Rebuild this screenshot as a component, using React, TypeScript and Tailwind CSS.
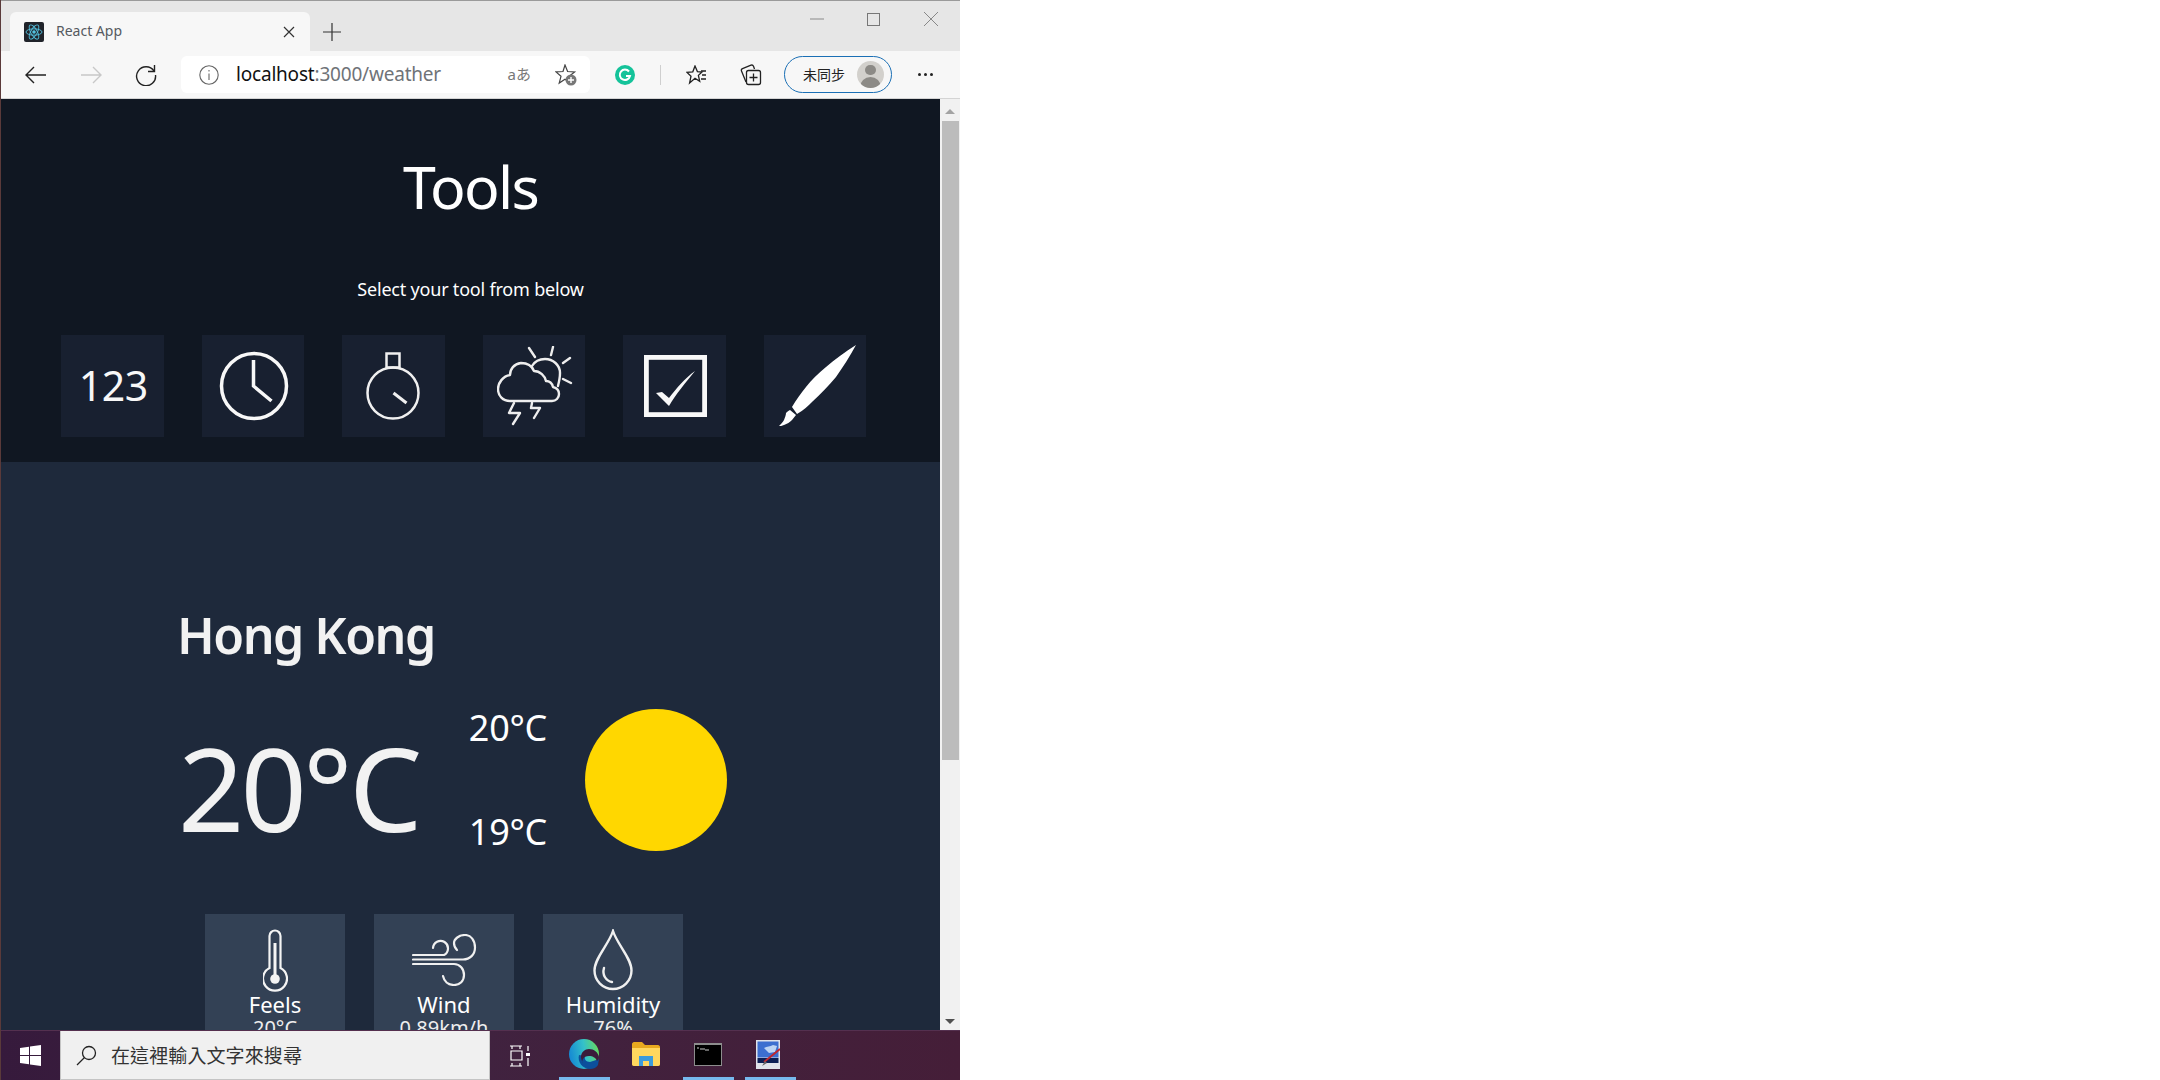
import React from 'react';

const segoe = "font-['Noto_Sans','Noto_Sans_CJK_TC',sans-serif]";

// Tool tiles on the dark header
function ToolTile({ children, className = '' }: { children: React.ReactNode; className?: string }) {
  return (
    <div className={`flex h-[102px] w-[102.5px] shrink-0 items-center justify-center bg-[#182030] ${className}`}>
      {children}
    </div>
  );
}

function ClockIcon() {
  return (
    <svg className="ml-[2px]" width="70" height="70" viewBox="0 0 70 70" fill="none" stroke="#f8f8f8" strokeWidth="3.5">
      <circle cx="35" cy="35" r="32.5" />
      <path d="M34.5 9v26l18 15" />
    </svg>
  );
}

function StopwatchIcon() {
  return (
    <svg width="54" height="68" viewBox="0 0 54 68" fill="none" stroke="#f0f0f0" strokeWidth="2.5">
      <circle cx="27" cy="41" r="25.5" />
      <rect x="20.5" y="1.5" width="13" height="14" />
      <path d="M27.5 41l13 10" strokeWidth="3" />
    </svg>
  );
}

function StormIcon() {
  return (
    <svg className="ml-[2px]" width="76" height="80" viewBox="0 0 76 80" fill="none" stroke="#eeeeee" strokeWidth="2.4" strokeLinecap="round" strokeLinejoin="round">
      <path d="M13 55h42c4 0 7-3 7-7 0-3-2-6-6-7-1-4-4-6-7-6-1-5-6-10-12-10-2-5-7-8-13-8-7 1-11 6-11 12C6 30 1 37 1 43c0 7 5 12 12 12z" />
      <path d="M35 20c3-5 8-7 13-7 8 0 15 6 15 14 0 5-1 9-2 13" />
      <path d="M32 2l6 9M56 1l-2 8M73 12l-7 5M74 37l-8-4" />
      <path d="M17 57l-5 10h11l-7 11M35 57l-1 5h9l-6 10" />
    </svg>
  );
}

function CheckboxIcon() {
  return (
    <svg className="ml-[1px]" width="63" height="62" viewBox="0 0 63 62" fill="none">
      <rect x="2.4" y="2.4" width="58.2" height="57.2" stroke="#f8f8f8" strokeWidth="4.8" />
      <path d="M12 38l6-1 7 6c7-9 16-20 26-27-9 11-19 23-26 35z" fill="#f8f8f8" />
    </svg>
  );
}

function BrushIcon() {
  return (
    <svg className="ml-[6px]" width="78" height="82" viewBox="0 0 78 82" fill="#ffffff">
      <path d="M77 0C66 7 56 14 47 22 39 29 32 35 27 42 22 48 17 55 13 62l5 7C25 65 29 61 33 57 42 49 50 40 57 32 64 22 71 11 77 0z" />
      <path d="M11 65l6 5-4 5c-2 2-5 4-8 5-2 1-4 1-5 1 2-2 4-4 5-6 1-3 2-5 2-7 1-1 2-2 4-3z" />
    </svg>
  );
}

function ThermometerIcon() {
  return (
    <svg width="25" height="63" viewBox="0 0 25 63" fill="none" stroke="#f4f4f4" strokeWidth="2.2">
      <path d="M6.5 39V7a5.5 5.5 0 0 1 11 0v32a12 12 0 1 1-11 0z" />
      <path d="M12 14v34" strokeWidth="3" />
      <circle cx="12" cy="50" r="4.8" fill="#f4f4f4" stroke="none" />
    </svg>
  );
}

function WindIcon() {
  return (
    <svg width="65" height="52" viewBox="0 0 65 52" fill="none" stroke="#f0f0f0" strokeWidth="2.2" strokeLinecap="round">
      <path d="M1 21h31a7.5 7.5 0 1 0-11-7" />
      <path d="M1 25.5h50c7 0 12-5 12-12S59 1 53 1c-6 0-11 4-11 8 0 3 1 5 3 7" />
      <path d="M1 30h41c6 0 10 5 10 11s-4 10-10 10c-6 0-10-4-11-9" />
    </svg>
  );
}

function DropIcon() {
  return (
    <svg width="40" height="62" viewBox="0 0 40 62" fill="none" stroke="#f0f0f0" strokeWidth="2.4" strokeLinecap="round">
      <path d="M20 2C16 15 1.5 29 1.5 41.5a18.5 18.5 0 0 0 37 0C38.5 29 24 15 20 2z" />
      <path d="M11 39c-2 7 2 13 8 14" />
    </svg>
  );
}

function StatCard({ icon, label, value }: { icon: React.ReactNode; label: string; value: string }) {
  return (
    <div className="flex h-[150px] w-[140px] shrink-0 flex-col items-center bg-[#334155] pt-[14px] text-white">
      <div className="flex h-[64px] items-center">{icon}</div>
      <div className="text-[22px] leading-[24px]">{label}</div>
      <div className="text-[20px] leading-[24px] text-[#eeeeee]">{value}</div>
    </div>
  );
}

function BrowserChrome() {
  return (
    <div className="shrink-0">
      {/* tab strip */}
      <div className="flex h-[51px] border-t border-[#9a9a9a] bg-[#e6e6e6] pt-[11px] pl-[9px]">
        <div className="flex h-[39px] w-[300px] items-center rounded-t-[6px] bg-[#f7f7f7] pl-[14px]">
          <svg width="20" height="20" viewBox="0 0 20 20" fill="none" stroke="#53c1de" strokeWidth="0.9">
            <rect width="20" height="20" rx="2" fill="#20232a" stroke="none" />
            <circle cx="10" cy="10" r="1.8" fill="#53c1de" stroke="none" />
            <ellipse cx="10" cy="10" rx="8" ry="3.2" />
            <ellipse cx="10" cy="10" rx="8" ry="3.2" transform="rotate(60 10 10)" />
            <ellipse cx="10" cy="10" rx="8" ry="3.2" transform="rotate(120 10 10)" />
          </svg>
          <span className="-mt-[2px] ml-[12px] text-[14px] text-[#555a60]">React App</span>
          <svg className="ml-auto mr-[15px]" width="12" height="12" viewBox="0 0 12 12" stroke="#333" strokeWidth="1.2">
            <path d="M1 1l10 10M11 1L1 11" />
          </svg>
        </div>
        <svg className="ml-[13px] mt-[11px]" width="18" height="18" viewBox="0 0 18 18" stroke="#333" strokeWidth="1.2">
          <path d="M9 0v18M0 9h18" />
        </svg>
        <div className="ml-auto flex h-[14px] items-center pr-[22px]">
          <svg width="14" height="14" viewBox="0 0 14 14" stroke="#8a8a8a" strokeWidth="1" fill="none">
            <path d="M0 7h14" />
          </svg>
          <svg className="ml-[43px]" width="13" height="13" viewBox="0 0 13 13" stroke="#777" strokeWidth="1" fill="none">
            <rect x="0.5" y="0.5" width="12" height="12" />
          </svg>
          <svg className="ml-[44px]" width="14" height="14" viewBox="0 0 14 14" stroke="#888" strokeWidth="1">
            <path d="M0 0l14 14M14 0L0 14" />
          </svg>
        </div>
      </div>
      {/* toolbar */}
      <div className="flex h-[48px] items-center border-b border-[#d4d4d4] bg-[#f7f7f7] pl-[24px]">
        <svg width="22" height="18" viewBox="0 0 22 18" fill="none" stroke="#222" strokeWidth="1.4">
          <path d="M21 9H1M9 1L1 9l8 8" />
        </svg>
        <svg className="ml-[33px]" width="22" height="18" viewBox="0 0 22 18" fill="none" stroke="#c8c8c8" strokeWidth="1.4">
          <path d="M1 9h20M13 1l8 8-8 8" />
        </svg>
        <svg className="ml-[33px]" width="22" height="22" viewBox="0 0 22 22" fill="none" stroke="#222" strokeWidth="1.4">
          <path d="M19 7A9.5 9.5 0 1 0 20.5 11" />
          <path d="M19.5 1v6.5h-6.5" />
        </svg>
        <div className="ml-[24px] flex h-[37px] w-[409px] items-center rounded-[6px] bg-white pl-[18px]">
          <svg width="20" height="20" viewBox="0 0 20 20" fill="none" stroke="#666" strokeWidth="1.1">
            <circle cx="10" cy="10" r="9.2" />
            <path d="M10 8.5V15M10 5v1.6" />
          </svg>
          <span className="ml-[17px] text-[19px] tracking-[-0.2px] text-[#111]">
            localhost<span className="text-[#6f7378]">:3000/weather</span>
          </span>
          <span className="ml-auto text-[15px] text-[#777]">aあ</span>
          <svg className="ml-[24px] mr-[13px]" width="22" height="22" viewBox="0 0 22 22" fill="none" stroke="#444" strokeWidth="1.2">
            <path d="M10 1l2.6 6.5 7 .4-5.4 4.4 1.8 6.8-6-3.8-5.8 3.8 1.8-6.8L1 7.9l7-.4z" />
            <circle cx="16" cy="16" r="5.5" fill="#777" stroke="none" />
            <path d="M16 13v6M13 16h6" stroke="#fff" strokeWidth="1.4" />
          </svg>
        </div>
        <svg className="ml-[25px]" width="20" height="20" viewBox="0 0 20 20">
          <circle cx="10" cy="10" r="10" fill="#15c39a" />
          <path d="M14 6.5A5.2 5.2 0 1 0 15 11h-4" fill="none" stroke="#fff" strokeWidth="2" />
        </svg>
        <div className="ml-[25px] h-[20px] w-px bg-[#cfcfcf]" />
        <svg className="ml-[25px]" width="22" height="20" viewBox="0 0 22 20" fill="none" stroke="#222" strokeWidth="1.3">
          <path d="M9 1l2.4 5.6 4.6.4-3.6 3.4 1.3 6-4.7-3.2L3.6 18 5 11.2 1 7.4l5.8-.6z" />
          <path d="M15 6h5M16 10h4M15 14h5" />
        </svg>
        <svg className="ml-[32px]" width="22" height="22" viewBox="0 0 22 22" fill="none" stroke="#222" strokeWidth="1.3">
          <path d="M6 18L1.5 7c-.4-1 0-2 1-2.4L11 1.2c1-.4 2-.1 2.5 1L14.5 5" />
          <rect x="6.5" y="6.5" width="14" height="14" rx="2" />
          <path d="M13.5 9.5v8M9.5 13.5h8" />
        </svg>
        <div className="ml-[22px] flex h-[37px] w-[108px] items-center rounded-full border border-[#1a6fb5] pl-[18px]">
          <span className="font-['Noto_Sans_CJK_TC',sans-serif] text-[14px] text-[#222]">未同步</span>
          <div className="ml-[12px] flex h-[27px] w-[27px] flex-col items-center overflow-hidden rounded-full bg-[#d2d0cc]">
            <div className="mt-[4px] h-[11px] w-[11px] rounded-full bg-[#8c8a86]" />
            <div className="mt-[2px] h-[12px] w-[21px] rounded-t-full bg-[#8c8a86]" />
          </div>
        </div>
        <div className="ml-[26px] flex gap-[3px]">
          <div className="h-[3px] w-[3px] rounded-full bg-[#222]" />
          <div className="h-[3px] w-[3px] rounded-full bg-[#222]" />
          <div className="h-[3px] w-[3px] rounded-full bg-[#222]" />
        </div>
      </div>
    </div>
  );
}

function TaskIcon({ children, active }: { children: React.ReactNode; active: boolean }) {
  return (
    <div className={`mx-[5.5px] flex w-[51px] items-center justify-center border-b-[3px] ${active ? 'border-[#76b9ed]' : 'border-transparent'}`}>
      {children}
    </div>
  );
}

function Taskbar() {
  return (
    <div className="flex h-[50px] shrink-0 items-stretch border-t border-[#54304f] bg-gradient-to-r from-[#361a3c] via-[#40223f] to-[#451e38]">
      <div className="flex w-[59px] items-center justify-center">
        <svg width="21" height="21" viewBox="0 0 21 21" fill="#fff">
          <path d="M0 3l9-1.3V10H0zM10 1.5L21 0v10H10zM0 11h9v8.300L0 18zM10 11h11v10l-11-1.5z" />
        </svg>
      </div>
      <div className="flex w-[430px] items-center border-x border-b border-[#c4c4c4] bg-[#f0f0f0] pl-[15px]">
        <svg width="21" height="21" viewBox="0 0 21 21" fill="none" stroke="#222" strokeWidth="1.3">
          <circle cx="13" cy="8" r="6.5" />
          <path d="M8.5 12.5L1 20" />
        </svg>
        <span className="ml-[14px] font-['Noto_Sans_CJK_TC',sans-serif] text-[19px] tracking-[0.1px] text-[#333]">在這裡輸入文字來搜尋</span>
      </div>
      <div className="flex w-[63.5px] items-center justify-center pr-[3px]">
        <svg width="20" height="22" viewBox="0 0 20 22" fill="none" stroke="#fff" strokeWidth="1.2">
          <path d="M0 1h12M2 1v3M10 1v3M1 6h11v9H1zM0 21h12M2 18v3M10 18v3M18 1v5M18 13v8" />
          <rect x="16" y="8" width="4" height="3" fill="#fff" stroke="none" />
        </svg>
      </div>
      <TaskIcon active={true}>
        <svg className="-ml-[2px]" width="30" height="30" viewBox="0 0 30 30">
          <defs>
            <linearGradient id="edgeFill" x1="0" y1="0.6" x2="1" y2="0.4">
              <stop offset="0" stopColor="#1487d4" />
              <stop offset="0.55" stopColor="#35c1c9" />
              <stop offset="1" stopColor="#66d95f" />
            </linearGradient>
          </defs>
          <circle cx="15" cy="15" r="15" fill="url(#edgeFill)" />
          <path d="M10 16c-2 7 4 14 11 14 3 0 6-1 8-4l1-6-9 3c-4 0-6-3-5-6z" fill="#0c4f9c" />
          <path d="M12 18c0-5 4-8 8-8 5 0 9 3 10 8 0 2-1 3-2 4-1-3-4-5-8-5-3 0-5 1-6 3-1 2-1 3 0 4-1-2-2-4-2-6z" fill="#3b1c3b" />
        </svg>
      </TaskIcon>
      <TaskIcon active={false}>
        <svg className="-ml-[2px]" width="28" height="24" viewBox="0 0 28 24">
          <path d="M0 2c0-1 1-2 2-2h8l3 3h13c1 0 2 1 2 2v17c0 1-1 2-2 2H2c-1 0-2-1-2-2z" fill="#e8a91f" />
          <path d="M0 6h28v16c0 1-1 2-2 2H2c-1 0-2-1-2-2z" fill="#ffd75e" />
          <path d="M7 14h14v10h-4v-5h-6v5H7z" fill="#3b9bdc" />
        </svg>
      </TaskIcon>
      <TaskIcon active={true}>
        <svg className="-ml-[2px]" width="28" height="23" viewBox="0 0 28 23">
          <rect width="28" height="23" fill="#8d8d8d" />
          <rect x="1" y="2" width="26" height="20" fill="#000" />
          <path d="M3 5h2M6 6h5M11 7h4" stroke="#ccc" strokeWidth="1" />
        </svg>
      </TaskIcon>
      <TaskIcon active={true}>
        <svg className="-ml-[5px]" width="24" height="29" viewBox="0 0 24 29">
          <rect width="24" height="29" fill="#dfe3ea" />
          <rect x="1.5" y="1.5" width="21" height="16" fill="#3c6fd0" />
          <rect x="1.5" y="18" width="21" height="5" fill="#0b1f55" />
          <path d="M8 8c3-2 6-1 9-3l4 1-2 6-6 1z" fill="#bcd4f3" />
          <path d="M24 9L8 22" stroke="#c1272d" strokeWidth="1.8" />
          <path d="M9 21l-3 5 5-3z" fill="#666" />
        </svg>
      </TaskIcon>
    </div>
  );
}

export default function App() {
  return (
    <div className={`flex h-screen w-full overflow-hidden bg-white ${segoe}`}>
      <div className="flex w-[960px] flex-col border-l border-[#5a3a3a]">
        <BrowserChrome />
        <div className="flex min-h-0 flex-1">
          <div className="min-w-0 flex-1 overflow-hidden bg-[#1e293b]">
            {/* Tools header */}
            <div className="h-[363px] bg-[#101722] pt-[46px] text-white">
              <h1 className="text-center text-[59px] leading-[82px] tracking-[-1.7px]">Tools</h1>
              <p className="mt-[49px] text-center text-[18px] leading-[26px] tracking-[-0.2px]">Select your tool from below</p>
              <div className="mt-[33px] flex gap-[38.1px] pl-[60px]">
                <ToolTile className="pl-[2px] text-[41px] tracking-[-0.5px] text-[#f8f8f8]">123</ToolTile>
                <ToolTile><ClockIcon /></ToolTile>
                <ToolTile><StopwatchIcon /></ToolTile>
                <ToolTile><StormIcon /></ToolTile>
                <ToolTile><CheckboxIcon /></ToolTile>
                <ToolTile><BrushIcon /></ToolTile>
              </div>
            </div>
            {/* Weather */}
            <div className="pl-[177px] pt-[138px] text-[#f2f2f2]">
              <h2 className="-ml-[1px] text-[50px] font-semibold leading-[70px] tracking-[-1.5px]">Hong Kong</h2>
              <div className="mt-[39px] flex h-[142px] items-center">
                <div className="mt-[14px] w-[292px] text-[116px] leading-[142px] tracking-[-3.8px]">20°C</div>
                <div className="flex h-[142px] w-[77px] flex-col items-end justify-between text-[36px] leading-[38px] tracking-[-0.3px] text-white">
                  <span>20°C</span>
                  <span>19°C</span>
                </div>
                <div className="ml-[38px] h-[142px] w-[142px] rounded-full bg-[#ffd700]" />
              </div>
              <div className="ml-[27px] mt-[63px] flex gap-[29px]">
                <StatCard icon={<ThermometerIcon />} label="Feels" value="20°C" />
                <StatCard icon={<WindIcon />} label="Wind" value="0.89km/h" />
                <StatCard icon={<DropIcon />} label="Humidity" value="76%" />
              </div>
            </div>
          </div>
          {/* scrollbar */}
          <div className="flex w-[20px] shrink-0 flex-col items-center bg-[#f1f1f1]">
            <div className="mt-[10px] h-0 w-0 border-x-[5px] border-b-[5px] border-x-transparent border-b-[#a3a3a3]" />
            <div className="mt-[7px] h-[639px] w-[17px] bg-[#bcbcbc]" />
            <div className="mt-auto mb-[6px] h-0 w-0 border-x-[5px] border-t-[5px] border-x-transparent border-t-[#505050]" />
          </div>
        </div>
        <Taskbar />
      </div>
    </div>
  );
}
